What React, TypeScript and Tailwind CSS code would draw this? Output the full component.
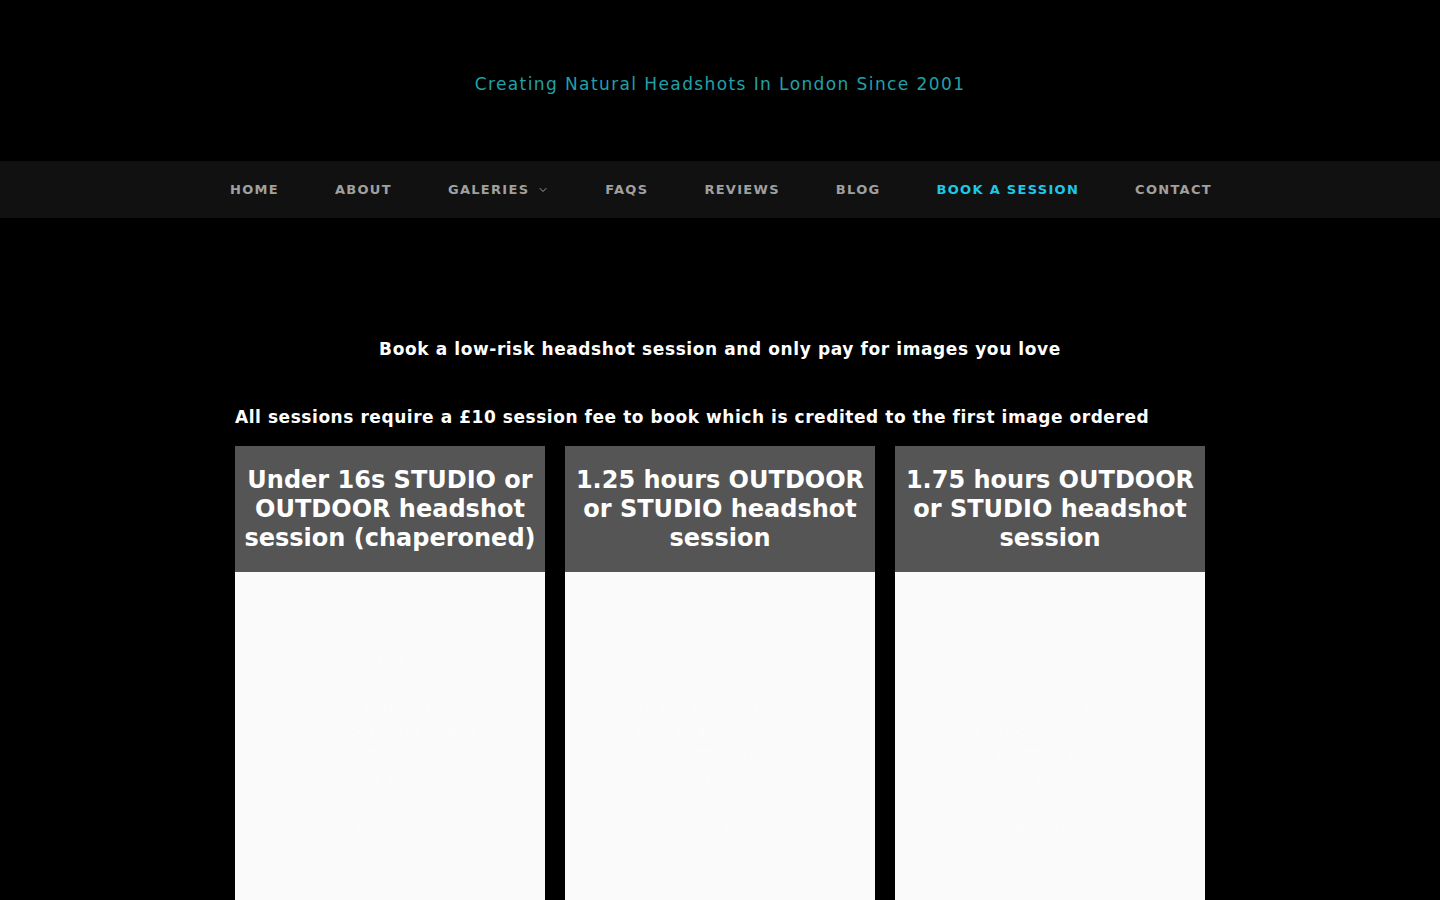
import { ChevronDown } from 'lucide-react';

const navItems = ['Home', 'About', 'Galeries', 'FAQs', 'Reviews', 'Blog', 'Book a Session', 'Contact'];

const sessions = [
  {
    title: 'Under 16s STUDIO or OUTDOOR headshot session (chaperoned)',
    lines: ['£95', 'Up to 45 minutes in the studio', 'or on location in London', '2 outfit changes', 'Online gallery within 48 hours', 'Book now'],
  },
  {
    title: '1.25 hours OUTDOOR or STUDIO headshot session',
    lines: ['£145', 'Up to 1.25 hours in the studio', 'or on location in London', '3 outfit changes', 'Online gallery within 48 hours', 'Book now'],
  },
  {
    title: '1.75 hours OUTDOOR or STUDIO headshot session',
    lines: ['£195', 'Up to 1.75 hours in the studio', 'or on location in London', '4 outfit changes', 'Online gallery within 48 hours', 'Book now'],
  },
];

export default function App() {
  return (
    <div className="min-h-screen bg-black text-white font-['DejaVu_Sans',sans-serif]">
      {/* Site header */}
      <header className="h-[161px] flex items-start justify-center pt-[72px]">
        <p className="text-[17px] tracking-[1.4px] text-[#22a0a8]">Creating Natural Headshots In London Since 2001</p>
      </header>

      {/* Main navigation */}
      <nav className="h-[57px] bg-[#111111] flex justify-center items-center">
        <ul className="flex items-center pl-[2px]">
          {navItems.map((item) => (
            <li
              key={item}
              className={`px-7 flex items-center gap-2 text-[13px] font-bold uppercase tracking-[1.3px] ${
                item === 'Book a Session' ? 'text-[#1ec8e6]' : 'text-[#a0a0a0]'
              }`}
            >
              {item}
              {item === 'Galeries' && <ChevronDown className="w-3 h-3" strokeWidth={2} />}
            </li>
          ))}
        </ul>
      </nav>

      {/* Booking content */}
      <main className="w-[970px] mx-auto pt-[119px]">
        <h2 className="text-center text-[17px] font-bold tracking-[0.6px]">
          Book a low-risk headshot session and only pay for images you love
        </h2>
        <p className="mt-[42px] text-[17px] font-bold tracking-[0.55px]">
          All sessions require a £10 session fee to book which is credited to the first image ordered
        </p>

        <div className="mt-[16px] grid grid-cols-3 gap-5">
          {sessions.map((s) => (
            <div key={s.title} className="flex flex-col">
              <div className="bg-[#555555] h-[126px] flex items-center justify-center px-2">
                <h3 className="text-center text-[24px] leading-[29px] font-bold">{s.title}</h3>
              </div>
              <div className="bg-[#fafafa] h-[340px] flex flex-col items-center pt-[78px] text-[14px] leading-[23px] text-[#fcfcfc]">
                <p>{s.lines[0]}</p>
                <p className="mt-[24px]">{s.lines[1]}</p>
                <p>{s.lines[2]}</p>
                <p>{s.lines[3]}</p>
                <p>{s.lines[4]}</p>
                <p className="mt-[26px]">{s.lines[5]}</p>
              </div>
            </div>
          ))}
        </div>
      </main>
    </div>
  );
}
